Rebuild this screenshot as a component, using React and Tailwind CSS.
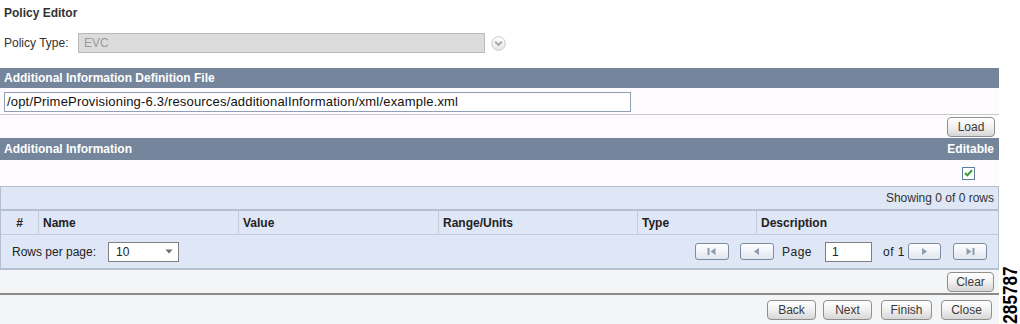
import React from "react";

function Button({ w, children }) {
  return (
    <div
      className={`${w} h-[20px] flex items-center justify-center rounded-[4px] border border-[#8f8f8f] bg-linear-to-b from-[#ffffff] via-[#f0f0f0] to-[#d6d6d6] text-[12px] text-[#3a3a3a] leading-none`}
    >
      {children}
    </div>
  );
}

function PagerBtn({ w, children }) {
  return (
    <div
      className={`${w} h-[17px] flex items-center justify-center rounded-[3px] border border-[#7b8ba3] bg-linear-to-b from-white to-[#e1e6ee]`}
    >
      {children}
    </div>
  );
}

const ic = "#8d9bb0";

export default function App() {
  return (
    <div className="w-[1020px] h-[324px] flex bg-white font-['Liberation_Sans',Arial,Helvetica,sans-serif] text-[#333] overflow-hidden">
      <div className="w-[999px] flex flex-col">
        {/* Title */}
        <div className="h-[26px] flex items-center pl-[4px] text-[12px] font-bold text-[#333]">
          Policy Editor
        </div>
        {/* Policy type */}
        <div className="h-[42px] pt-[7px] flex items-start pl-[4px]">
          <div className="w-[74px] h-[20px] flex items-center text-[12px] text-[#333]">Policy Type:</div>
          <div className="w-[407px] h-[20px] flex items-center bg-[#dcdcdc] border border-[#b9b9b9] pl-[5px] text-[12px] text-[#9a9a9a]">
            EVC
          </div>
          <div className="ml-[6px] h-[20px] flex items-center">
            <svg width="15" height="15" viewBox="0 0 15 15">
              <defs>
                <linearGradient id="cg" x1="0" y1="0" x2="0" y2="1">
                  <stop offset="0" stopColor="#ffffff" />
                  <stop offset="1" stopColor="#e6e6e6" />
                </linearGradient>
              </defs>
              <circle cx="7.5" cy="7.5" r="6.8" fill="url(#cg)" stroke="#c9c9c9" strokeWidth="1" />
              <path d="M4.6 6.2 L7.5 9 L10.4 6.2" fill="none" stroke="#a5a5a5" strokeWidth="1.8" strokeLinecap="round" strokeLinejoin="round" />
            </svg>
          </div>
        </div>
        {/* Bar 1 */}
        <div className="h-[20px] flex items-center pl-[4px] bg-[#75859b] text-white text-[12px] font-bold">
          Additional Information Definition File
        </div>
        {/* Path input */}
        <div className="h-[27px] pt-[4px] pl-[4px] bg-[#fdfbfd] border-b border-[#c9c9c9]">
          <div className="w-[627px] h-[20px] flex items-center bg-white border border-[#8fa0b6] pl-[2px] text-[13px] tracking-[0.18px] text-[#111]">
            /opt/PrimeProvisioning-6.3/resources/additionalInformation/xml/example.xml
          </div>
        </div>
        {/* Load */}
        <div className="h-[23px] flex items-center justify-end pr-[4px] bg-[#fdfbfd]">
          <Button w="w-[48px]">Load</Button>
        </div>
        {/* Bar 2 */}
        <div className="h-[22px] flex items-center justify-between pl-[4px] pr-[5px] bg-[#75859b] text-white text-[12px] font-bold">
          <span>Additional Information</span>
          <span>Editable</span>
        </div>
        {/* Editable checkbox row */}
        <div className="h-[26px] flex items-center justify-end pr-[24px] bg-[#fdfbfd]">
          <div className="w-[13px] h-[13px] border border-[#5f7c9c] bg-white flex items-center justify-center">
            <svg width="9" height="8" viewBox="0 0 9 8">
              <path d="M1 4 L3.4 6.4 L8 1.2" fill="none" stroke="#2f9a2f" strokeWidth="2" />
            </svg>
          </div>
        </div>
        {/* Table */}
        <div className="border border-b-2 border-[#b4bfcf] bg-[#dfe6f5]">
          <div className="h-[22px] flex items-center justify-end pr-[4px] text-[12px] text-[#333]">
            Showing 0 of 0 rows
          </div>
          <div className="h-[26px] flex border-t-2 border-b border-t-[#b4bfcf] border-b-[#c2cbd9] text-[12px] font-bold text-[#222]">
            <div className="w-[38px] flex items-center justify-center border-r border-[#c2cbd9]">#</div>
            <div className="w-[200px] flex items-center pl-[4px] border-r border-[#c2cbd9]">Name</div>
            <div className="w-[200px] flex items-center pl-[4px] border-r border-[#c2cbd9]">Value</div>
            <div className="w-[199px] flex items-center pl-[4px] border-r border-[#c2cbd9]">Range/Units</div>
            <div className="w-[119px] flex items-center pl-[4px] border-r border-[#c2cbd9]">Type</div>
            <div className="flex-1 flex items-center pl-[4px]">Description</div>
          </div>
          <div className="h-[33px] flex items-center text-[12px] text-[#222]">
            <div className="pl-[11px] w-[107px]">Rows per page:</div>
            <div className="w-[71px] h-[20px] flex items-center justify-between bg-white border border-[#7f7f7f] pl-[7px] pr-[5px]">
              <span>10</span>
              <svg width="8" height="5" viewBox="0 0 8 5">
                <path d="M0.5 0.5 L7.5 0.5 L4 4.5 Z" fill="#6b6b6b" />
              </svg>
            </div>
            <div className="flex-1" />
            <PagerBtn w="w-[34px]">
              <svg width="11" height="9" viewBox="0 0 11 9">
                <rect x="1.5" y="1" width="2" height="7" fill={ic} />
                <path d="M9.5 1 L4.5 4.5 L9.5 8 Z" fill={ic} />
              </svg>
            </PagerBtn>
            <div className="ml-[11px]">
              <PagerBtn w="w-[34px]">
                <svg width="9" height="9" viewBox="0 0 9 9">
                  <path d="M7 1 L2 4.5 L7 8 Z" fill={ic} />
                </svg>
              </PagerBtn>
            </div>
            <span className="ml-[8px] tracking-[0.5px]">Page</span>
            <div className="ml-[13px] w-[47px] h-[20px] flex items-center bg-white border border-[#7f7f7f] pl-[6px]">1</div>
            <span className="ml-[11px] tracking-[0.5px]">of 1</span>
            <div className="ml-[3px]">
              <PagerBtn w="w-[33px]">
                <svg width="9" height="9" viewBox="0 0 9 9">
                  <path d="M2 1 L7 4.5 L2 8 Z" fill={ic} />
                </svg>
              </PagerBtn>
            </div>
            <div className="ml-[12px] mr-[11px]">
              <PagerBtn w="w-[34px]">
                <svg width="11" height="9" viewBox="0 0 11 9">
                  <path d="M1.5 1 L6.5 4.5 L1.5 8 Z" fill={ic} />
                  <rect x="7.5" y="1" width="2" height="7" fill={ic} />
                </svg>
              </PagerBtn>
            </div>
          </div>
        </div>
        {/* Clear */}
        <div className="h-[23px] flex items-center justify-end pr-[5px] bg-[#f4f5f7]">
          <Button w="w-[47px]">Clear</Button>
        </div>
        <div className="h-[2px] bg-[#8a8a8a]" />
        {/* Bottom buttons */}
        <div className="flex-1 flex items-start justify-end gap-[7px] pt-[5px] pr-[7px] bg-[#f4f5f7]">
          <Button w="w-[49px]">Back</Button>
          <Button w="w-[49px]">Next</Button>
          <div className="ml-[2px]">
            <Button w="w-[51px]">Finish</Button>
          </div>
          <div className="ml-[2px]">
            <Button w="w-[51px]">Close</Button>
          </div>
        </div>
      </div>
      {/* Figure number */}
      <div className="flex-1 flex flex-col justify-end items-center pb-[2px]">
        <div className="[writing-mode:vertical-rl] rotate-180 scale-y-[0.82] translate-y-[8px] origin-center text-[21px] font-bold leading-none text-black">
          285787
        </div>
      </div>
    </div>
  );
}
